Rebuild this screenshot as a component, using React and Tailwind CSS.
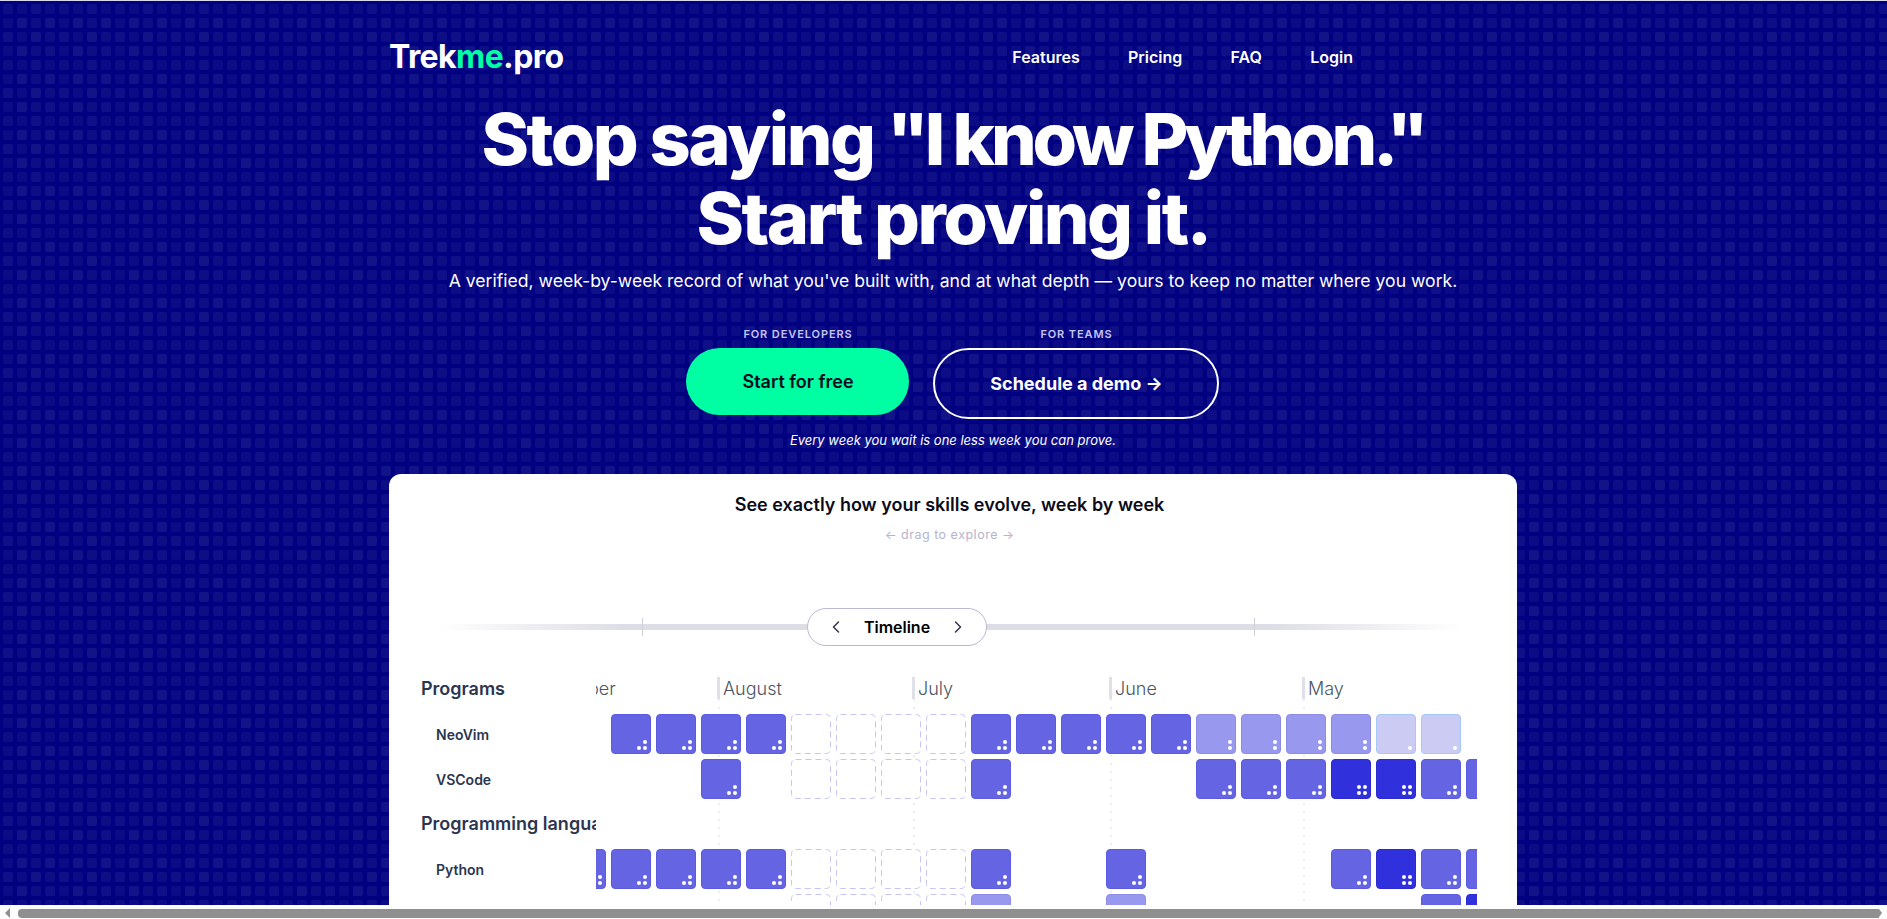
import { ChevronLeft, ChevronRight } from "lucide-react";

const levelClass = {
  1: "bg-[#cbcbf4] border-[#a5c8f8]",
  2: "bg-[#9898ee] border-[#8c8ce4]",
  3: "bg-[#6565e4] border-[#5a5ae2]",
  4: "bg-[#3030dc] border-[#2a2ad0]",
};

const dotsByLevel = {
  1: [false, false, false, true],
  2: [false, true, false, true],
  3: [false, true, true, true],
  4: [true, true, true, true],
};

// each row holds 21 week columns, the first one is mostly scrolled away
// "-" empty, "d" dashed (missing week), number = depth
const rows = [
  { label: "Programs", heading: true },
  { label: "NeoVim", weeks: ["-", 3, 3, 3, 3, "d", "d", "d", "d", 3, 3, 3, 3, 3, 2, 2, 2, 2, 1, 1, "-"] },
  { label: "VSCode", weeks: ["-", "-", "-", 3, "-", "d", "d", "d", "d", 3, "-", "-", "-", "-", 3, 3, 3, 4, 4, 3, 3] },
  { label: "Programming languages", heading: true },
  { label: "Python", weeks: [3, 3, 3, 3, 3, "d", "d", "d", "d", 3, "-", "-", 3, "-", "-", "-", "-", 3, 4, 3, 3] },
  { label: "", weeks: ["-", "-", "-", "-", "-", "d", "d", "d", "d", 2, "-", "-", 2, "-", "-", "-", "-", "-", "-", 3, 4] },
];

const months = [
  { name: "September", width: "w-[199px]" },
  { name: "August", width: "w-[195px]" },
  { name: "July", width: "w-[197px]" },
  { name: "June", width: "w-[193px]" },
  { name: "May", width: "w-[200px]" },
];

// brightness of the 4x4 repeating block of tiles
const tileOpacity = [
  0.05, 0.045, 0.06, 0.045,
  0.045, 0.07, 0.05, 0.07,
  0.06, 0.045, 0.07, 0.05,
  0.045, 0.07, 0.05, 0.06,
];

function PatternBackground() {
  return (
    <svg className="absolute inset-0 h-full w-full blur-[0.5px]" aria-hidden="true">
      <defs>
        <pattern id="tiles" x="3" y="3" width="56" height="56" patternUnits="userSpaceOnUse">
          {tileOpacity.map((o, i) => (
            <rect key={i} x={(i % 4) * 14} y={Math.floor(i / 4) * 14} width="10" height="10" rx="2" fill="#fff" opacity={o} />
          ))}
        </pattern>
      </defs>
      <rect width="100%" height="100%" fill="url(#tiles)" />
    </svg>
  );
}

function Nav() {
  return (
    <nav className="flex h-[98px] w-[1128px] items-center justify-between pt-[14px]">
      <div className="text-[32px] leading-none font-bold tracking-[-0.6px] text-white">
        Trek<span className="text-[#00ffa3]">me</span>.pro
      </div>
      <div className="mr-[164px] flex items-center gap-[48.3px] text-[16px] font-semibold text-white">
        <span>Features</span>
        <span>Pricing</span>
        <span>FAQ</span>
        <span>Login</span>
      </div>
    </nav>
  );
}

function Hero() {
  return (
    <div className="flex flex-col items-center text-white">
      <h1 className="text-center text-[72px] leading-[79px] font-extrabold tracking-[-2.5px]">
        Stop saying <span className="tracking-[-4.2px]">"I know Python."</span>
        <br />
        Start proving it.
      </h1>
      <p className="mt-[10px] text-[17.6px] leading-[28px]">
        A verified, week-by-week record of what you've built with, and at what depth — yours to keep no matter where you work.
      </p>
      <div className="mt-[32px] flex items-start gap-[24px]">
        <div className="flex w-[223px] flex-col items-center">
          <span className="mb-[7px] text-[11px] leading-[14px] font-semibold tracking-[0.9px] text-[#c4c4f0]">FOR DEVELOPERS</span>
          <button className="h-[67px] w-full rounded-full bg-[#00ffa3] text-[18px] font-semibold text-[#0a0a20]">
            Start for free
          </button>
        </div>
        <div className="flex w-[286px] flex-col items-center">
          <span className="mb-[7px] text-[11px] leading-[14px] font-semibold tracking-[0.9px] text-[#c4c4f0]">FOR TEAMS</span>
          <button className="h-[71px] w-full rounded-full border-2 border-white text-[18px] font-bold text-white">
            Schedule a demo →
          </button>
        </div>
      </div>
      <p className="mt-[11px] text-[13px] leading-[20px] italic">Every week you wait is one less week you can prove.</p>
    </div>
  );
}

function TimelineBar() {
  return (
    <div className="mt-[65px] flex h-[38px] items-center pl-[50px]">
      <div className="relative h-[6px] w-[368px] flex-none bg-gradient-to-r from-transparent to-[#dddde5] to-50%">
        <div className="absolute -top-[6px] left-[203px] h-[18px] w-px bg-[#d0d0da]" />
      </div>
      <div className="flex h-[38px] w-[180px] flex-none items-center justify-between rounded-full border border-[#b9b9d2] bg-white px-[18px]">
        <ChevronLeft size={20} strokeWidth={1.75} className="text-[#33334d]" />
        <span className="text-[16px] font-semibold text-black">Timeline</span>
        <ChevronRight size={20} strokeWidth={1.75} className="text-[#33334d]" />
      </div>
      <div className="relative h-[6px] w-[475px] flex-none bg-gradient-to-l from-transparent to-[#dddde5] to-40%">
        <div className="absolute -top-[6px] right-[207px] h-[18px] w-px bg-[#d0d0da]" />
      </div>
    </div>
  );
}

function Week({ value }) {
  if (value === "-") return <div className="h-10 w-10 flex-none" />;
  if (value === "d") {
    return (
      <svg className="h-10 w-10 flex-none" viewBox="0 0 40 40" aria-hidden="true">
        <rect x="0.5" y="0.5" width="39" height="39" rx="4" fill="#fff" stroke="#c6c6f6" strokeDasharray="6 4" />
      </svg>
    );
  }
  return (
    <div className={`flex h-10 w-10 flex-none items-end justify-end rounded-[4px] border p-[3px] ${levelClass[value]}`}>
      <div className="grid grid-cols-2 gap-[2px]">
        {dotsByLevel[value].map((on, i) => (
          <span key={i} className={`h-1 w-1 rounded-full ${on ? "bg-white" : "bg-transparent"}`} />
        ))}
      </div>
    </div>
  );
}

function Chart() {
  return (
    <div className="mt-[20px] flex">
      <div className="w-[207px] flex-none overflow-hidden pl-[32px]">
        {rows.map((row, i) =>
          row.heading ? (
            <div key={i} className="flex h-[45px] items-center whitespace-nowrap text-[18px] font-semibold text-[#2b3550]">
              {row.label}
            </div>
          ) : (
            <div key={i} className="flex h-[45px] items-center pt-[2px] pl-[15px] text-[14px] font-semibold text-[#2b3550]">
              {row.label}
            </div>
          )
        )}
      </div>
      <div className="relative h-[300px] w-[881px] flex-none overflow-hidden">
        <div className="absolute top-0 -left-[78px] flex h-full">
          {months.map((m) => (
            <div key={m.name} className={`flex flex-none flex-col ${m.width}`}>
              <div className="mt-[11px] flex h-[22px] items-center whitespace-nowrap border-l-[3px] border-[#e0e0e8] pl-[3px] text-[18px] font-light text-[#4b5563]">
                {m.name}
              </div>
              <div className="ml-[1px] flex-1 w-[2px] bg-[repeating-linear-gradient(to_bottom,#eeeef2_0,#eeeef2_2px,transparent_2px,transparent_8px)]" />
            </div>
          ))}
        </div>
        <div className="relative">
          {rows.map((row, i) => (
            <div key={i} className="flex h-[45px] items-start gap-[5px] pt-[3px] -ml-[30px]">
              {row.weeks && row.weeks.map((w, j) => <Week key={j} value={w} />)}
            </div>
          ))}
        </div>
      </div>
    </div>
  );
}

export default function App() {
  return (
    <div className="flex h-screen flex-col overflow-hidden bg-white font-['Inter',sans-serif]">
      <div className="relative min-h-0 flex-1 overflow-hidden border-t border-[#d8d8e8] bg-[#000080]">
        <PatternBackground />
        <div className="relative flex w-[1906px] flex-col items-center">
          <Nav />
          <Hero />
          <div className="mt-[24px] h-[600px] w-[1128px] rounded-[12px] bg-white pt-[20px]">
            <div className="pr-[7px]">
              <h2 className="text-center text-[18px] leading-[22px] font-semibold text-[#0b0b1a]">
                See exactly how your skills evolve, week by week
              </h2>
              <p className="mt-[11px] text-center text-[12.5px] leading-[16px] tracking-[0.5px] text-[#b4b4cc]">
                ← drag to explore →
              </p>
            </div>
            <TimelineBar />
            <Chart />
          </div>
        </div>
      </div>
      <div className="flex h-[14px] flex-none items-center bg-[#fdfdfd] pt-[2px]">
        <span className="ml-[5px] h-0 w-0 border-y-[5px] border-r-[5px] border-y-transparent border-r-[#8f8f8f]" />
        <div className="ml-[8px] h-[9px] w-[1861px] rounded-l-[4px] bg-[#8f8f8f]" />
        <span className="h-0 w-0 border-y-[4.5px] border-l-[3px] border-y-transparent border-l-[#8f8f8f]" />
      </div>
    </div>
  );
}
